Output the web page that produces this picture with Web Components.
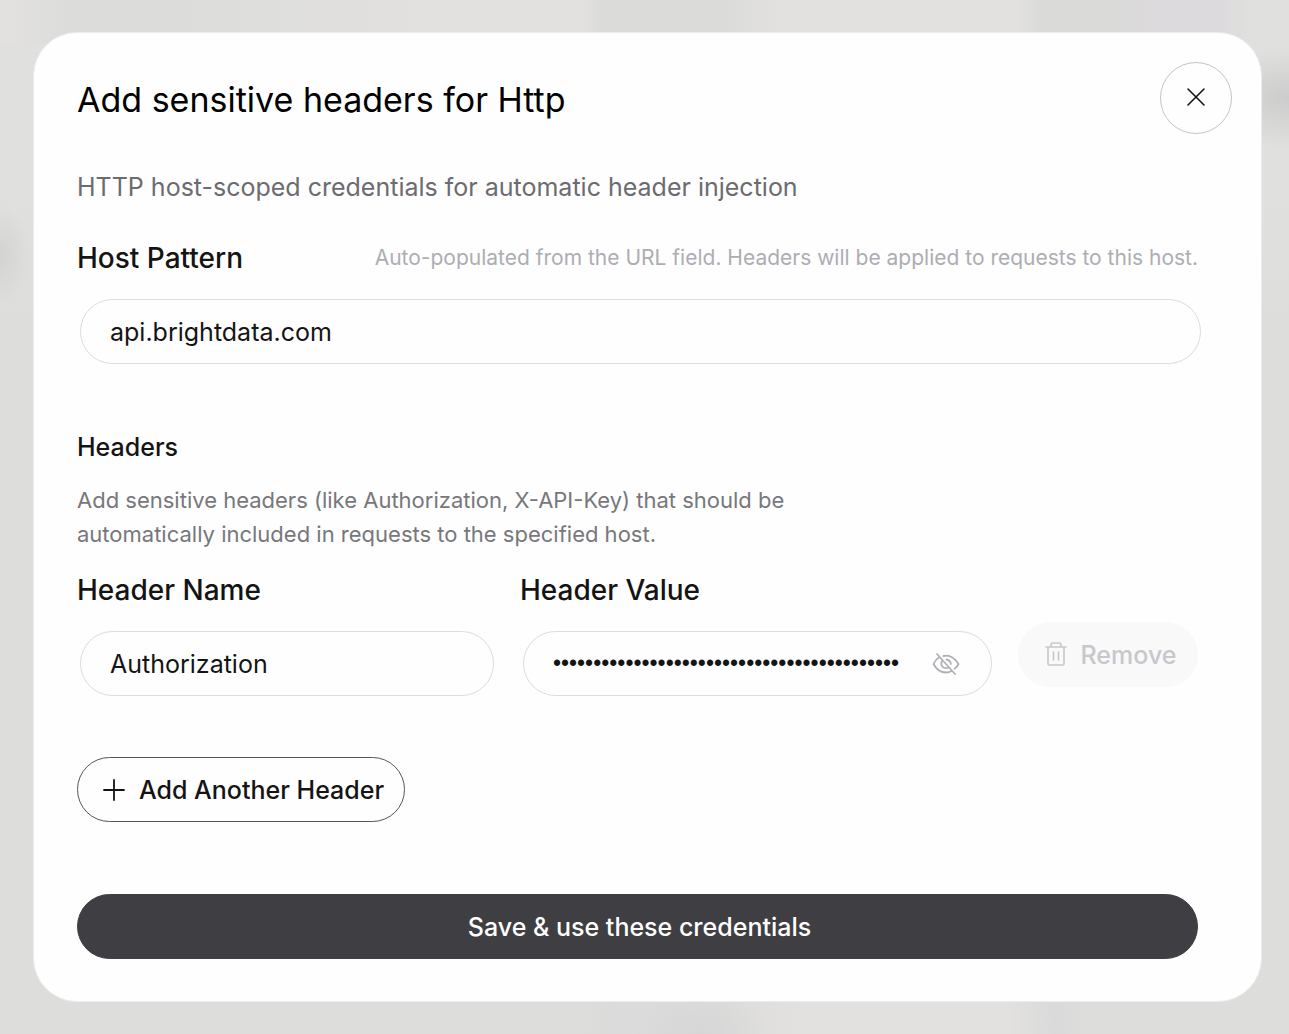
<!DOCTYPE html>
<html lang="en">
<head>
<meta charset="UTF-8">
<meta name="viewport" content="width=device-width, initial-scale=1">
<title>Add sensitive headers for Http</title>
<style>
  body {
    margin: 0;
    min-height: 100vh;
    box-sizing: border-box;
    padding: 32px 27px 32px 33px;
    font-family: Inter, "Liberation Sans", sans-serif;
    color: #141414;
    background:
      radial-gradient(ellipse 90px 50px at 100% 98px, #cccccc, transparent),
      radial-gradient(ellipse 30px 50px at 0 255px, #d3d3d3, transparent),
      radial-gradient(ellipse 70px 50px at 700px 100%, #d6d6d7, transparent),
      linear-gradient(90deg, #dddddb 580px, #dbdbdb 610px, #dddddb 720px, #e2e1df 800px 1010px, #dadadb 1055px, #dddddb 1085px) 0 100% / 100% 44px no-repeat,
      linear-gradient(90deg, #e2e1df 14px, #dcdcda 64px 180px, #e2e1df 420px 585px, #dbdbda 600px 720px, #e2e1df 780px 1020px, #dadad9 1040px 1120px, #dddadd 1160px 1220px, #e0e0de 1250px) 0 0 / 100% 44px no-repeat,
      linear-gradient(#e0e0de 200px, #dddddb 320px);
  }
</style>
</head>
<body>

<credentials-dialog heading="Add sensitive headers for Http">
  <credentials-form></credentials-form>
</credentials-dialog>

<script>
const ICONS = {
  close: `<svg width="24" height="24" viewBox="0 0 24 24" fill="none" stroke="currentColor" stroke-width="1.6" stroke-linecap="round"><path d="M4 3l16 16M20 3L4 19"/></svg>`,
  plus: `<svg width="24" height="24" viewBox="0 0 24 24" fill="none" stroke="currentColor" stroke-width="1.8" stroke-linecap="round"><path d="M12 2v20M2 12h20"/></svg>`,
  trash: `<svg width="24" height="28" viewBox="0 0 24 28" fill="none" stroke="currentColor" stroke-width="1.6" stroke-linecap="round" stroke-linejoin="round"><path d="M2 6h20M4 6v17q0 1 1 1h14q1 0 1-1V6M7 6V4q0-2 2-2h6q2 0 2 2v2M9.500 11v8M14.500 11v8"/></svg>`,
  eyeOff: `<svg width="28" height="24" viewBox="0 0 28 24" fill="none" stroke="currentColor" stroke-width="1.8" stroke-linecap="round" stroke-linejoin="round"><path d="M5 2l18 20M11.500 4Q20 2 26.500 12q-1.500 3-4 4.800M7.500 5Q3.500 7.500 1.500 12 6 20.500 14 20.500q3 0 5.500-1.500M14.500 7.500q4 .8 4.300 4.500M10.500 8.500c-3 4 .5 9.500 6 7"/></svg>`
};

class CredentialsDialog extends HTMLElement {
  constructor() {
    super();
    this.attachShadow({ mode: "open" });
    this.shadowRoot.innerHTML = `
      <style>
        :host {
          display: block;
          box-sizing: border-box;
          padding: 29px 29px 42px 43px;
          background: #fefefe;
          border: 1px solid #ececec;
          border-radius: 44px;
        }
        header {
          display: flex;
          justify-content: space-between;
          align-items: flex-start;
        }
        h1 {
          margin: 0;
          font-size: 34px;
          line-height: 76px;
          font-weight: 400;
          color: #000;
        }
        button {
          display: flex;
          align-items: center;
          justify-content: center;
          width: 72px;
          height: 72px;
          padding: 0;
          background: none;
          border: 1px solid #c4c4c6;
          border-radius: 50%;
          color: #141414;
        }
        .content {
          padding: 31px 34px 0 0;
        }
      </style>
      <header>
        <h1>${this.getAttribute("heading")}</h1>
        <button type="button" aria-label="Close">${ICONS.close}</button>
      </header>
      <div class="content"><slot></slot></div>
    `;
  }
}
customElements.define("credentials-dialog", CredentialsDialog);

class TextField extends HTMLElement {
  constructor() {
    super();
    this.attachShadow({ mode: "open" });

    const type = this.getAttribute("type") || "text";
    const hint = this.getAttribute("hint");

    this.shadowRoot.innerHTML = `
      <style>
        :host { display: block; min-width: 0; }
        .top {
          display: flex;
          justify-content: space-between;
          align-items: center;
          margin-bottom: 21px;
          line-height: 40px;
        }
        label { font-size: 28px; font-weight: 500; }
        .hint { font-size: 21px; color: #adadb3; }
        .box {
          display: flex;
          align-items: center;
          box-sizing: border-box;
          height: 65px;
          margin: 0 -3px 0 3px;
          padding: 0 29px;
          border: 1px solid #dcdcde;
          border-radius: 33px;
        }
        input {
          flex: 1;
          min-width: 0;
          padding: 0;
          border: 0;
          outline: 0;
          background: none;
          color: inherit;
          font-family: inherit;
          font-size: 25px;
        }
        input[type="password"] { font-family: "Liberation Sans", sans-serif; font-size: 23px; }
        button {
          display: flex;
          margin: 0 2px 0 24px;
          padding: 0;
          border: 0;
          background: none;
          color: #b0b0b6;
        }
      </style>
      <div class="top">
        <label for="field">${this.getAttribute("label")}</label>
        ${hint ? `<span class="hint">${hint}</span>` : ""}
      </div>
      <div class="box">
        <input id="field" type="${type}" value="${this.getAttribute("value") || ""}">
        ${type === "password" ? `<button type="button" aria-label="Show value">${ICONS.eyeOff}</button>` : ""}
      </div>
    `;

    const toggle = this.shadowRoot.querySelector("button");
    if (toggle) {
      toggle.addEventListener("click", () => {
        const input = this.shadowRoot.querySelector("input");
        input.type = input.type === "password" ? "text" : "password";
      });
    }
  }
}
customElements.define("text-field", TextField);

class PillButton extends HTMLElement {
  constructor() {
    super();
    this.attachShadow({ mode: "open" });

    const icon = this.getAttribute("icon");
    const disabled = this.hasAttribute("disabled") ? "disabled" : "";

    this.shadowRoot.innerHTML = `
      <style>
        :host { display: block; }
        button {
          display: flex;
          align-items: center;
          justify-content: center;
          gap: 13px;
          width: 100%;
          height: 65px;
          padding: 0 20px 0 24px;
          border: 1px solid #55555a;
          border-radius: 33px;
          background: none;
          color: #141414;
          font-family: inherit;
          font-size: 25px;
          font-weight: 500;
          white-space: nowrap;
        }
        :host([variant="primary"]) button {
          background: #3f3e43;
          border-color: #3f3e43;
          color: #fff;
        }
        button:disabled {
          background: #f9f9f9;
          border-color: #f9f9f9;
          color: #c7c7cc;
        }
      </style>
      <button type="button" ${disabled}>${icon ? ICONS[icon] : ""}<slot></slot></button>
    `;
  }
}
customElements.define("pill-button", PillButton);

class CredentialsForm extends HTMLElement {
  constructor() {
    super();
    this.attachShadow({ mode: "open" });
    this.shadowRoot.innerHTML = `
      <style>
        :host { display: block; }
        p, h2 { margin: 0; }
        .intro {
          margin-bottom: 33px;
          font-size: 25px;
          line-height: 36px;
          color: #6b6b70;
        }
        h2 {
          margin: 65px 0 18px;
          font-size: 25px;
          line-height: 36px;
          font-weight: 500;
        }
        .help {
          max-width: 760px;
          margin-bottom: 19px;
          font-size: 22px;
          line-height: 34px;
          color: #77777c;
        }
        .row {
          display: grid;
          grid-template-columns: 15fr 17fr 180px;
          gap: 29px;
          align-items: end;
          margin-bottom: 61px;
        }
        .remove { margin-bottom: 9px; }
        .add { width: fit-content; margin-bottom: 72px; }
      </style>
      <p class="intro">HTTP host-scoped credentials for automatic header injection</p>
      <text-field label="Host Pattern" value="api.brightdata.com"
        hint="Auto-populated from the URL field. Headers will be applied to requests to this host."></text-field>
      <h2>Headers</h2>
      <p class="help">Add sensitive headers (like Authorization, X-API-Key) that should be<br>automatically included in requests to the specified host.</p>
      <div class="row">
        <text-field label="Header Name" value="Authorization"></text-field>
        <text-field label="Header Value" type="password" value="${"x".repeat(43)}"></text-field>
        <pill-button class="remove" icon="trash" disabled>Remove</pill-button>
      </div>
      <pill-button class="add" icon="plus">Add Another Header</pill-button>
      <pill-button variant="primary">Save &amp; use these credentials</pill-button>
    `;
  }
}
customElements.define("credentials-form", CredentialsForm);
</script>
</body>
</html>
